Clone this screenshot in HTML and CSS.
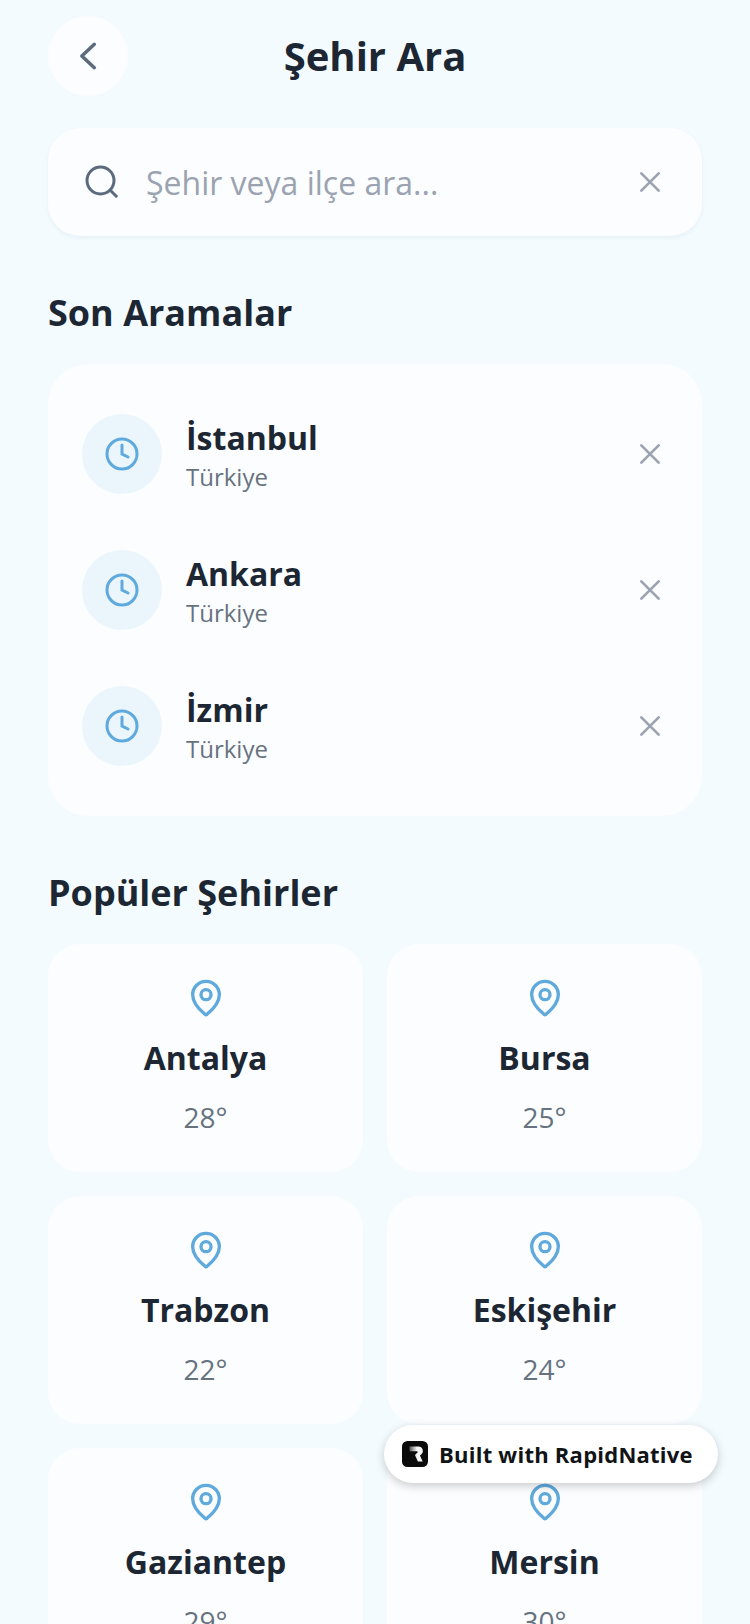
FILE: index.html
```html
<!doctype html>
<html lang="tr">
  <head>
    <meta charset="UTF-8" />
    <meta name="viewport" content="width=device-width, initial-scale=1.0" />
    <title>Şehir Ara</title>
    <link rel="stylesheet" href="styles.css">
  </head>
  <body>
    <svg class="icon-defs" width="0" height="0" aria-hidden="true">
      <symbol id="i-close" viewBox="0 0 24 24">
        <path d="M5.500 5.500l13 13M18.500 5.500l-13 13" />
      </symbol>
      <symbol id="i-clock" viewBox="0 0 24 24">
        <circle cx="12" cy="12" r="10" />
        <path d="M12 6v6l4 2" />
      </symbol>
      <symbol id="i-pin" viewBox="0 0 24 24">
        <path d="M20 10c0 5-5.500 10.200-7.400 11.800a1 1 0 0 1-1.200 0C9.500 20.200 4 15 4 10a8 8 0 0 1 16 0z" />
        <circle cx="12" cy="10" r="3" />
      </symbol>
      <linearGradient id="logo-fade" x1="0" y1="0" x2="1" y2="0">
        <stop offset="0" stop-color="#555556" />
        <stop offset="0.55" stop-color="#f6f6f6" />
      </linearGradient>
    </svg>

    <div class="container">
      <header class="header">
        <button class="back-btn">
          <svg class="icon-back" viewBox="0 0 24 24"><path d="M15.800 5l-7.500 7 7.500 7" /></svg>
        </button>
        <h1 class="title">Şehir Ara</h1>
      </header>

      <div class="search-box">
        <svg class="icon-search" viewBox="0 0 24 24">
          <circle cx="11" cy="11" r="9" />
          <path d="M21.500 21.500l-4-4" />
        </svg>
        <span class="search-placeholder">Şehir veya ilçe ara...</span>
        <svg class="icon-close"><use href="#i-close" /></svg>
      </div>

      <h2 class="section-title recent-title">Son Aramalar</h2>
      <div class="recent-card">
        <div class="recent-row">
          <div class="clock-circle"><svg class="icon-clock"><use href="#i-clock" /></svg></div>
          <div class="recent-info">
            <div class="recent-name">İstanbul</div>
            <div class="recent-country">Türkiye</div>
          </div>
          <svg class="icon-close"><use href="#i-close" /></svg>
        </div>
        <div class="recent-row">
          <div class="clock-circle"><svg class="icon-clock"><use href="#i-clock" /></svg></div>
          <div class="recent-info">
            <div class="recent-name">Ankara</div>
            <div class="recent-country">Türkiye</div>
          </div>
          <svg class="icon-close"><use href="#i-close" /></svg>
        </div>
        <div class="recent-row">
          <div class="clock-circle"><svg class="icon-clock"><use href="#i-clock" /></svg></div>
          <div class="recent-info">
            <div class="recent-name">İzmir</div>
            <div class="recent-country">Türkiye</div>
          </div>
          <svg class="icon-close"><use href="#i-close" /></svg>
        </div>
      </div>

      <h2 class="section-title popular-title">Popüler Şehirler</h2>
      <div class="city-grid">
        <div class="city-card">
          <svg class="icon-pin"><use href="#i-pin" /></svg>
          <div class="city-name">Antalya</div>
          <div class="city-temp">28°</div>
        </div>
        <div class="city-card">
          <svg class="icon-pin"><use href="#i-pin" /></svg>
          <div class="city-name">Bursa</div>
          <div class="city-temp">25°</div>
        </div>
        <div class="city-card">
          <svg class="icon-pin"><use href="#i-pin" /></svg>
          <div class="city-name">Trabzon</div>
          <div class="city-temp">22°</div>
        </div>
        <div class="city-card">
          <svg class="icon-pin"><use href="#i-pin" /></svg>
          <div class="city-name">Eskişehir</div>
          <div class="city-temp">24°</div>
        </div>
        <div class="city-card">
          <svg class="icon-pin"><use href="#i-pin" /></svg>
          <div class="city-name">Gaziantep</div>
          <div class="city-temp">29°</div>
        </div>
        <div class="city-card">
          <svg class="icon-pin"><use href="#i-pin" /></svg>
          <div class="city-name">Mersin</div>
          <div class="city-temp">30°</div>
        </div>
      </div>
    </div>

    <div class="built-badge">
      <svg class="badge-logo" viewBox="0 0 26 26">
        <rect width="26" height="26" rx="5.500" fill="#0b0b0c" />
        <path d="M7.500 5.500h9a4.500 4.500 0 0 1 3 7.800l-1.600 1.200 2.800 6h-4.800l-3-6.500 2.600-2.400a.8.8 0 0 0-.5-1.400H7.500z" fill="url(#logo-fade)" />
      </svg>
      <span class="badge-text">Built with RapidNative</span>
    </div>
  </body>
</html>
```

FILE: styles.css
```css
* {
  margin: 0;
  padding: 0;
  box-sizing: border-box;
}

html,
body {
  height: 1624px;
  overflow: hidden;
}

body {
  font-family: 'Open Sans', 'Noto Sans', sans-serif;
  background: #f3fbff;
  color: #1c2733;
  position: relative;
}

.icon-defs {
  position: absolute;
}

.container {
  padding: 16px 48px 0;
}

.header {
  display: flex;
  align-items: center;
  height: 80px;
  position: relative;
}

.back-btn {
  width: 80px;
  height: 80px;
  border: none;
  border-radius: 50%;
  background: #fbfdff;
  display: flex;
  align-items: center;
  justify-content: center;
}

.icon-back {
  width: 40px;
  height: 40px;
  fill: none;
  stroke: #5b6b7d;
  stroke-width: 2.1;
  stroke-linecap: round;
  stroke-linejoin: round;
}

.title {
  position: absolute;
  left: 0;
  right: 0;
  text-align: center;
  font-size: 40px;
  font-weight: 700;
  line-height: 52px;
}

.search-box {
  display: flex;
  align-items: center;
  height: 108px;
  margin-top: 32px;
  padding: 0 36px 0 36px;
  background: #fbfdff;
  border-radius: 32px;
  box-shadow: 0 2px 4px rgba(40, 70, 100, 0.06);
}

.icon-search {
  width: 36px;
  height: 36px;
  flex-shrink: 0;
  fill: none;
  stroke: #5b6b7d;
  stroke-width: 2;
  stroke-linecap: round;
}

.search-placeholder {
  flex: 1;
  margin-left: 26px;
  font-size: 32px;
  color: #9aa3af;
}

.icon-close {
  width: 32px;
  height: 32px;
  flex-shrink: 0;
  fill: none;
  stroke: #9aa3af;
  stroke-width: 2;
  stroke-linecap: round;
}

.section-title {
  font-size: 36px;
  font-weight: 700;
  line-height: 48px;
}

.recent-title {
  margin-top: 53px;
}

.recent-card {
  margin-top: 27px;
  padding: 50px 36px 50px 34px;
  background: #fbfdff;
  border-radius: 40px;
}

.recent-row {
  display: flex;
  align-items: center;
  height: 80px;
}

.recent-row + .recent-row {
  margin-top: 56px;
}

.clock-circle {
  width: 80px;
  height: 80px;
  flex-shrink: 0;
  border-radius: 50%;
  background: #ebf6fc;
  display: flex;
  align-items: center;
  justify-content: center;
}

.icon-clock {
  width: 36px;
  height: 36px;
  fill: none;
  stroke: #5fa9dc;
  stroke-width: 2;
  stroke-linecap: round;
}

.recent-info {
  flex: 1;
  margin-left: 24px;
}

.recent-name {
  font-size: 32px;
  font-weight: 700;
  line-height: 44px;
}

.recent-country {
  margin-top: 1px;
  font-size: 24px;
  line-height: 32px;
  color: #66737f;
}

.popular-title {
  margin-top: 53px;
}

.city-grid {
  display: grid;
  grid-template-columns: 315px 315px;
  gap: 24px;
  margin-top: 27px;
}

.city-card {
  height: 228px;
  padding-top: 34px;
  background: #fbfdff;
  border-radius: 32px;
  display: flex;
  flex-direction: column;
  align-items: center;
}

.icon-pin {
  width: 40px;
  height: 40px;
  fill: none;
  stroke: #5fa9dc;
  stroke-width: 2;
  stroke-linecap: round;
  stroke-linejoin: round;
}

.city-name {
  margin-top: 18px;
  font-size: 32px;
  font-weight: 700;
  line-height: 44px;
}

.city-temp {
  margin-top: 18px;
  font-size: 28px;
  line-height: 38px;
  color: #66737f;
}

.built-badge {
  position: absolute;
  left: 384px;
  top: 1425px;
  width: 334px;
  height: 58px;
  padding-left: 18px;
  display: flex;
  align-items: center;
  background: #fff;
  border-radius: 29px;
  box-shadow: 0 3px 10px rgba(0, 0, 0, 0.2);
}

.badge-logo {
  width: 26px;
  height: 26px;
  flex-shrink: 0;
}

.badge-text {
  margin-left: 11px;
  font-size: 22px;
  letter-spacing: 0.24px;
  font-weight: 700;
  color: #111417;
}
```
